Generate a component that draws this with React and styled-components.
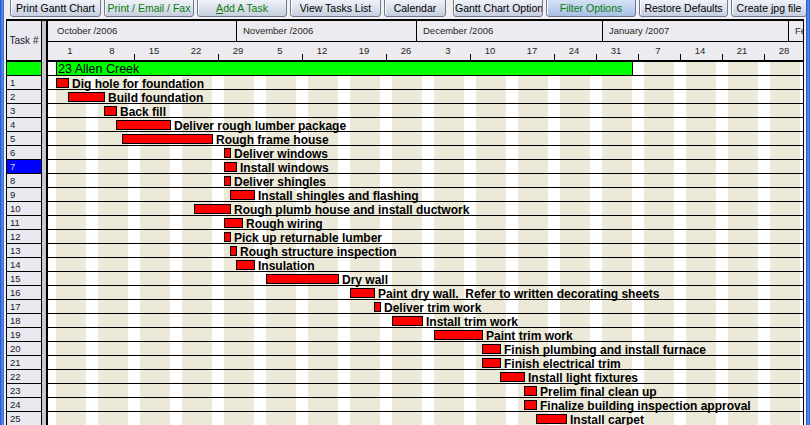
import React from 'react';
import styled, { createGlobalStyle } from 'styled-components';

const DAY = 6; // px per day on the timeline
const ORIGIN = 2; // chart offset of Oct 1, 2006

const GlobalStyle = createGlobalStyle`
    html, body {
        margin: 0;
        padding: 0;
        overflow: hidden;
        background: #f0f0f0;
    }
    body {
        font-family: "Liberation Sans", Arial, sans-serif;
    }
`;

const Page = styled.div`
    display: flex;
    width: 810px;
    height: 425px;
    overflow: hidden;
    background: #f0f0f0;
`;

const Frame = styled.div`
    flex: none;
    width: 4px;
    background: linear-gradient(90deg, #1c4fc4 0%, #5d8fe9 55%, #2d62d8 100%);
`;

const Main = styled.div`
    flex: 1;
    min-width: 0;
    display: flex;
    flex-direction: column;
`;

const Toolbar = styled.div`
    flex: none;
    height: 19px;
    box-sizing: border-box;
    padding: 0 0 2px 6px;
    display: flex;
    align-items: flex-end;
    gap: 3px;
    overflow: hidden;
`;

const Button = styled.div`
    flex: none;
    width: ${p => p.$w}px;
    height: 20px;
    margin-right: ${p => p.$extra || 0}px;
    box-sizing: border-box;
    padding: 2px 1px 0;
    border: 1px solid #6e7a92;
    border-radius: 3px;
    background: ${p => p.$active
        ? 'linear-gradient(#dbe6f8, #bccfee 60%, #a9c0e6)'
        : 'linear-gradient(#f4f6fa, #d9dfeb 60%, #c6cedf)'};
    box-shadow: inset 1px 1px 0 #fff;
    color: ${p => p.$green ? '#0a7d0a' : '#000'};
    font-size: 10.5px;
    line-height: 16px;
    text-align: center;
    white-space: nowrap;
    overflow: hidden;

    u {
        text-decoration: underline;
    }
`;

const Grid = styled.div`
    flex: 1;
    min-height: 0;
    display: flex;
    margin: 0 2px;
    border-top: 2px solid #000;
`;

const TaskCol = styled.div`
    flex: none;
    width: 36px;
    box-sizing: border-box;
    border-left: 1px solid #000;
    border-right: 1px solid #000;
    display: flex;
    flex-direction: column;
    background: #e9e9ef;
`;

const TaskHead = styled.div`
    flex: none;
    height: 39px;
    border-bottom: 2px solid #000;
    display: flex;
    align-items: center;
    justify-content: center;
    font-size: 10px;
    color: #1a1a2a;
`;

const TaskCell = styled.div`
    flex: none;
    height: 13px;
    border-bottom: 1px solid #000;
    padding-left: 3px;
    background: ${p => p.$bg || '#e9e9ef'};
    color: ${p => p.$fg || '#1a1a2a'};
    font-size: 9.5px;
    line-height: 13px;
`;

const Splitter = styled.div`
    flex: none;
    width: 4px;
    background: #c6c6cc;
`;

const Chart = styled.div`
    flex: 1;
    min-width: 0;
    display: flex;
    flex-direction: column;
    border-left: 2px solid #000;
    border-right: 1px solid #000;
    overflow: hidden;
    background: #fff;
`;

const ChartHead = styled.div`
    flex: none;
    height: 39px;
    border-bottom: 2px solid #000;
    background: #ebebf0;
    display: flex;
    flex-direction: column;
`;

const MonthRow = styled.div`
    flex: none;
    height: 20px;
    border-bottom: 1px solid #000;
    padding-left: ${ORIGIN}px;
    display: flex;
`;

const Month = styled.div`
    flex: none;
    width: ${p => p.$days * DAY}px;
    box-sizing: border-box;
    border-left: ${p => p.$first ? 'none' : '1px solid #000'};
    padding-left: ${p => p.$first ? 7 : 6}px;
    font-size: 9.5px;
    line-height: 20px;
    color: #2a1f1a;
    white-space: nowrap;
    overflow: hidden;
`;

const DayRow = styled.div`
    flex: none;
    height: 18px;
    padding-left: 1px;
    display: flex;
`;

const Week = styled.div`
    flex: none;
    width: 42px;
    text-align: center;
    font-size: 9.5px;
    line-height: 18px;
    color: #2a1f1a;
    background-image: ${p => p.$tick ? 'linear-gradient(#000, #000)' : 'none'};
    background-size: 1px 6px;
    background-position: 1px 100%;
    background-repeat: no-repeat;
`;

const Body = styled.div`
    flex: 1;
    background: repeating-linear-gradient(90deg, #fff 0 6px, #ece9d8 6px 36px, #fff 36px 42px);
    background-position: ${ORIGIN}px 0;
`;

const Row = styled.div`
    height: 13px;
    border-bottom: 1px solid #000;
    display: flex;
    align-items: flex-start;
`;

const ProjectBar = styled.div`
    flex: none;
    height: 13px;
    margin-left: ${p => ORIGIN + p.$start * DAY}px;
    width: ${p => p.$days * DAY + 1}px;
    box-sizing: border-box;
    border-left: 1px solid #000;
    border-right: 1px solid #000;
    background: #00ff00;
    padding-left: 1px;
    font-size: 12.5px;
    line-height: 15px;
    white-space: nowrap;
`;

const Bar = styled.div`
    flex: none;
    margin-top: 2px;
    margin-left: ${p => ORIGIN + p.$start * DAY}px;
    width: ${p => p.$days * DAY + 1}px;
    height: 10px;
    box-sizing: border-box;
    border: 1px solid #000;
    background: #ff0000;
`;

const Label = styled.span`
    margin-left: 3px;
    font-size: 12px;
    font-weight: bold;
    line-height: 16px;
    white-space: pre;
`;

const buttons = [
    { text: 'Print Gantt Chart', w: 91 },
    { text: 'Print / Email / Fax', w: 90, green: true },
    { text: <><u>A</u>dd A Task</>, w: 90, green: true },
    { text: 'View Tasks List', w: 91 },
    { text: 'Calendar', w: 62, extra: 4 },
    { text: 'Gantt Chart Options', w: 90 },
    { text: 'Filter Options', w: 90, green: true, active: true },
    { text: 'Restore Defaults', w: 89 },
    { text: 'Create jpg file', w: 76 },
];

const months = [
    { name: 'October /2006', days: 31 },
    { name: 'November /2006', days: 30 },
    { name: 'December /2006', days: 31 },
    { name: 'January /2007', days: 31 },
    { name: 'February /2007', days: 28 },
];

const tickWeeks = [2, 4, 6, 8, 10, 12, 13, 14, 15, 16, 17];

const weeks = Array.from({ length: 18 }, (_, i) => {
    const d = new Date(2006, 9, 1 + i * 7);
    return { label: d.getDate(), tick: tickWeeks.includes(i) };
});

// [start day from Oct 1, duration in days, name]
const tasks = [
    [1, 2, 'Dig hole for foundation'],
    [3, 6, 'Build foundation'],
    [9, 2, 'Back fill'],
    [11, 9, 'Deliver rough lumber package'],
    [12, 15, 'Rough frame house'],
    [29, 1, 'Deliver windows'],
    [29, 2, 'Install windows'],
    [29, 1, 'Deliver shingles'],
    [30, 4, 'Install shingles and flashing'],
    [24, 6, 'Rough plumb house and install ductwork'],
    [29, 3, 'Rough wiring'],
    [29, 1, 'Pick up returnable lumber'],
    [30, 1, 'Rough structure inspection'],
    [31, 3, 'Insulation'],
    [36, 12, 'Dry wall'],
    [50, 4, 'Paint dry wall.  Refer to written decorating sheets'],
    [54, 1, 'Deliver trim work'],
    [57, 5, 'Install trim work'],
    [64, 8, 'Paint trim work'],
    [72, 3, 'Finish plumbing and install furnace'],
    [72, 3, 'Finish electrical trim'],
    [75, 4, 'Install light fixtures'],
    [79, 2, 'Prelim final clean up'],
    [79, 2, 'Finalize building inspection approval'],
    [81, 5, 'Install carpet'],
];

const App = () => {
    return (
        <>
            <GlobalStyle />
            <Page>
                <Frame />
                <Main>
                    <Toolbar>
                        {buttons.map((b, i) => (
                            <Button key={i} $w={b.w} $green={b.green} $active={b.active} $extra={b.extra}>
                                {b.text}
                            </Button>
                        ))}
                    </Toolbar>

                    <Grid>
                        <TaskCol>
                            <TaskHead>Task #</TaskHead>
                            <TaskCell $bg="#00ff00" />
                            {tasks.map((t, i) => (
                                <TaskCell
                                    key={i}
                                    $bg={i + 1 === 7 ? '#0000ff' : undefined}
                                    $fg={i + 1 === 7 ? '#d4d4ff' : undefined}
                                >
                                    {i + 1}
                                </TaskCell>
                            ))}
                        </TaskCol>

                        <Splitter />

                        <Chart>
                            <ChartHead>
                                <MonthRow>
                                    {months.map((m, i) => (
                                        <Month key={m.name} $days={m.days} $first={i === 0}>{m.name}</Month>
                                    ))}
                                </MonthRow>
                                <DayRow>
                                    {weeks.map((w, i) => (
                                        <Week key={i} $tick={w.tick}>{w.label}</Week>
                                    ))}
                                </DayRow>
                            </ChartHead>

                            <Body>
                                <Row>
                                    <ProjectBar $start={1} $days={96}>23 Allen Creek</ProjectBar>
                                </Row>
                                {tasks.map(([start, days, name], i) => (
                                    <Row key={i}>
                                        <Bar $start={start} $days={days} />
                                        <Label>{name}</Label>
                                    </Row>
                                ))}
                            </Body>
                        </Chart>
                    </Grid>
                </Main>
                <Frame />
            </Page>
        </>
    );
};

export default App;
